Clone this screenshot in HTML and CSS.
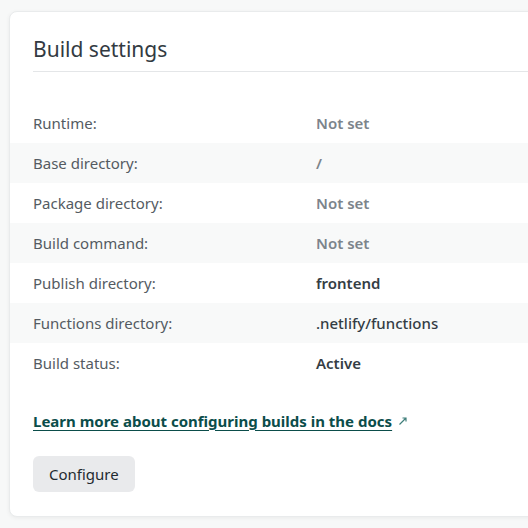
FILE: index.html
```html
<!DOCTYPE html>
<html>
<head>
<meta charset="utf-8">
<link rel="stylesheet" href="styles.css">
</head>
<body>
<section class="card">
  <header class="card-head">
    <h2 class="title">Build settings</h2>
  </header>
  <dl class="settings">
    <div class="row"><dt>Runtime:</dt><dd class="muted">Not set</dd></div>
    <div class="row alt"><dt>Base directory:</dt><dd class="muted">/</dd></div>
    <div class="row"><dt>Package directory:</dt><dd class="muted">Not set</dd></div>
    <div class="row alt"><dt>Build command:</dt><dd class="muted">Not set</dd></div>
    <div class="row"><dt>Publish directory:</dt><dd>frontend</dd></div>
    <div class="row alt"><dt>Functions directory:</dt><dd class="code">.netlify/functions</dd></div>
    <div class="row"><dt>Build status:</dt><dd>Active</dd></div>
  </dl>
  <div class="card-foot">
    <p class="docs"><a href="#" class="link">Learn more about configuring builds in the docs</a><svg class="ext" width="10" height="10" viewBox="0 0 10 10"><path d="M1.5 8.5 L8 2 M4.5 2 H8 V5.5" fill="none" stroke="#3e7e7a" stroke-width="1.2"/></svg></p>
    <button class="btn">Configure</button>
  </div>
</section>
</body>
</html>
```
FILE: styles.css
```css
html, body { margin: 0; padding: 0; }
body {
  background: #f7f8f8;
  font-family: "Noto Sans", "Open Sans", sans-serif;
  overflow: hidden;
  width: 528px;
  height: 528px;
  padding: 11px 0 0 9px;
  box-sizing: border-box;
}
.card {
  margin-right: -40px;
  background: #fff;
  border: 1px solid #e9ebec;
  border-radius: 8px;
  box-shadow: 0 1px 4px rgba(0,0,0,0.06);
  padding-bottom: 24px;
}
.card-head {
  margin: 0 0 0 23px;
  padding: 24px 0 9px;
  border-bottom: 1px solid #e4e6e8;
}
.title {
  margin: 0;
  font-size: 21px;
  font-weight: 400;
  line-height: 26px;
  color: #323a42;
}
.settings {
  margin: 31px 0 0;
  padding: 0;
}
.row {
  display: flex;
  align-items: center;
  height: 40px;
  font-size: 15px;
}
.row.alt { background: #f8f9f9; }
.row dt {
  width: 283px;
  padding-left: 23px;
  color: #545b62;
}
.row dd {
  margin: 0;
  font-weight: 600;
  color: #343d44;
}
.row dd.muted { color: #7c848b; }
.row dd.code { font-weight: 500; }
.card-foot {
  padding: 28px 0 0 23px;
}
.docs {
  margin: 0;
  font-size: 15px;
  line-height: 20px;
  display: flex;
  align-items: center;
  gap: 6px;
}
.link {
  color: #0b4d4a;
  font-weight: 700;
  text-decoration: underline;
  text-underline-offset: 3px;
}
.btn {
  margin-top: 25px;
  height: 36px;
  padding: 0 16px;
  border: none;
  border-radius: 6px;
  background: #e9eaec;
  color: #1f2a30;
  font-family: inherit;
  font-size: 15px;
}
```
